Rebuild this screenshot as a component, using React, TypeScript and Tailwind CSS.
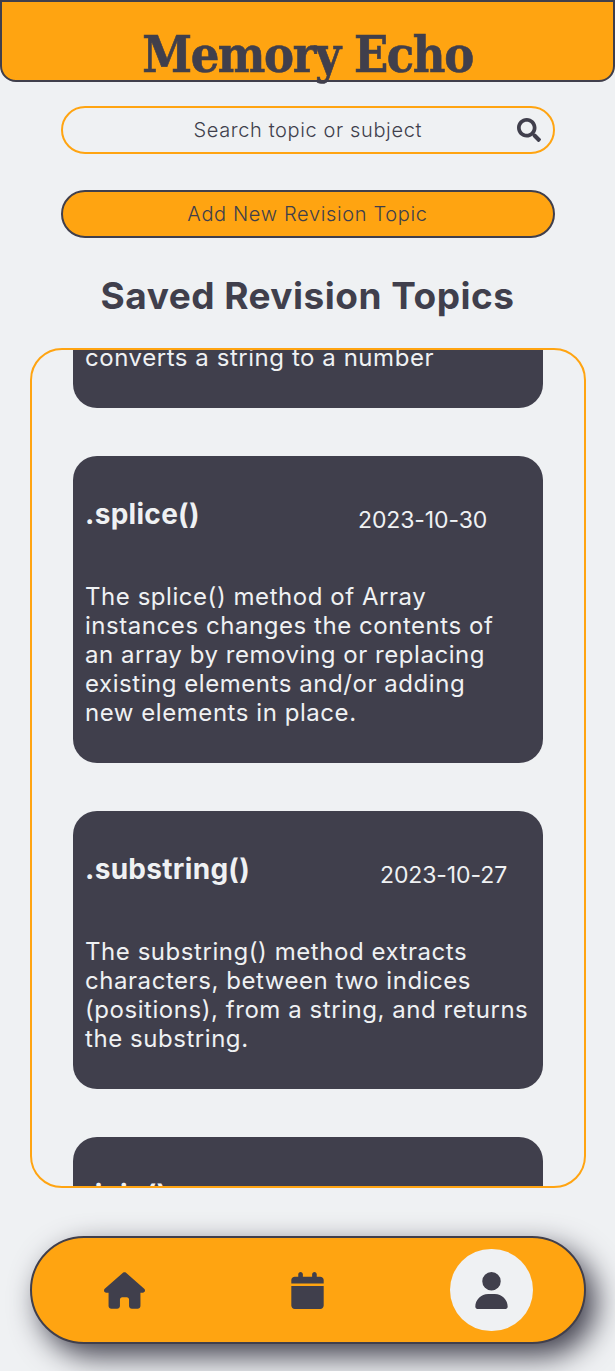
import { FaHouse, FaCalendar, FaUser } from 'react-icons/fa6'
import { FaSearch } from 'react-icons/fa'

const topics = [
  {
    title: '.splice()',
    date: '2023-10-30',
    titleWidth: 'w-[273px]',
    lines: [
      'The splice() method of Array',
      'instances changes the contents of',
      'an array by removing or replacing',
      'existing elements and/or adding',
      'new elements in place.',
    ],
  },
  {
    title: '.substring()',
    date: '2023-10-27',
    titleWidth: 'w-[295px]',
    lines: [
      'The substring() method extracts',
      'characters, between two indices',
      '(positions), from a string, and returns',
      'the substring.',
    ],
  },
  {
    title: '.join()',
    date: '2023-10-25',
    titleWidth: 'w-[273px]',
    lines: ['The join() method creates and returns', 'a new string by concatenating all of', 'the elements in an array.'],
  },
]

function TopicCard({ title, date, titleWidth, lines }: (typeof topics)[number]) {
  return (
    <div className="mb-12 rounded-3xl bg-[#403f4c] px-3 pt-[40px] pb-[36px] text-[#eff1f3]">
      <div className="flex items-start">
        <h3 className={`${titleWidth} shrink-0 text-[28px] leading-[36px] font-bold tracking-[0.3px]`}>{title}</h3>
        <p className="mt-[6px] text-[23px] leading-[36px] tracking-[-0.1px]">{date}</p>
      </div>
      <div className="mt-[44px] text-[24px] leading-[29px] tracking-[0.55px] whitespace-nowrap">
        {lines.map((line) => (
          <p key={line}>{line}</p>
        ))}
      </div>
    </div>
  )
}

export default function App() {
  return (
    <div className="flex h-[1371px] flex-col overflow-hidden bg-[#eff1f3] font-['Inter','Liberation_Sans',sans-serif] text-[#403f4c]">
      <header className="h-[82px] shrink-0 rounded-b-[16px] border-2 border-[#403f4c] bg-[#ffa411] pt-[25px] text-center">
        <h1 className="font-['DejaVu_Serif_Condensed','DejaVu_Serif',serif] text-[50px] leading-[56px] font-bold tracking-[-1.4px] [-webkit-text-stroke:0.6px_#403f4c]">
          Memory Echo
        </h1>
      </header>

      <div className="mx-auto mt-6 flex h-12 w-[494px] shrink-0 items-center justify-between rounded-full border-2 border-[#ffa411] pr-[12px] pl-[131px]">
        <span className="text-[20px] font-light tracking-[0.62px]">Search topic or subject</span>
        <FaSearch className="text-[24px]" />
      </div>

      <button className="mx-auto mt-9 h-12 w-[494px] shrink-0 rounded-full border-2 border-[#403f4c] bg-[#ffa411] text-[20px] font-light tracking-[0.65px]">
        Add New Revision Topic
      </button>

      <h2 className="mt-[36px] shrink-0 text-center text-[37px] leading-[44px] font-bold tracking-[0.48px]">
        Saved Revision Topics
      </h2>

      <section className="mt-[30px] ml-[30px] h-[840px] w-[556px] shrink-0 overflow-hidden rounded-[32px] border-2 border-[#ffa411] px-[41px]">
        <div className="-mt-[94px]">
          <div className="mb-12 rounded-3xl bg-[#403f4c] px-3 pb-[36px] text-[#eff1f3]">
            <p className="pt-[58px] text-[24px] leading-[29px] tracking-[0.55px]">
              The Number() function
              <br />
              converts a string to a number
            </p>
          </div>
          {topics.map((topic) => (
            <TopicCard key={topic.title} {...topic} />
          ))}
        </div>
      </section>

      <nav className="mt-[48px] ml-[30px] grid h-[108px] w-[556px] shrink-0 grid-cols-3 place-items-center rounded-full border-2 border-[#403f4c] bg-[#ffa411] px-[1.5px] shadow-[10px_12px_30px_#403f4c]">
        <FaHouse className="-translate-x-px text-[41px]" />
        <FaCalendar className="-translate-x-px text-[37px]" />
        <div className="flex h-[82px] w-[83px] items-center justify-center rounded-full bg-[#eff1f3]">
          <FaUser className="text-[37px]" />
        </div>
      </nav>
    </div>
  )
}
